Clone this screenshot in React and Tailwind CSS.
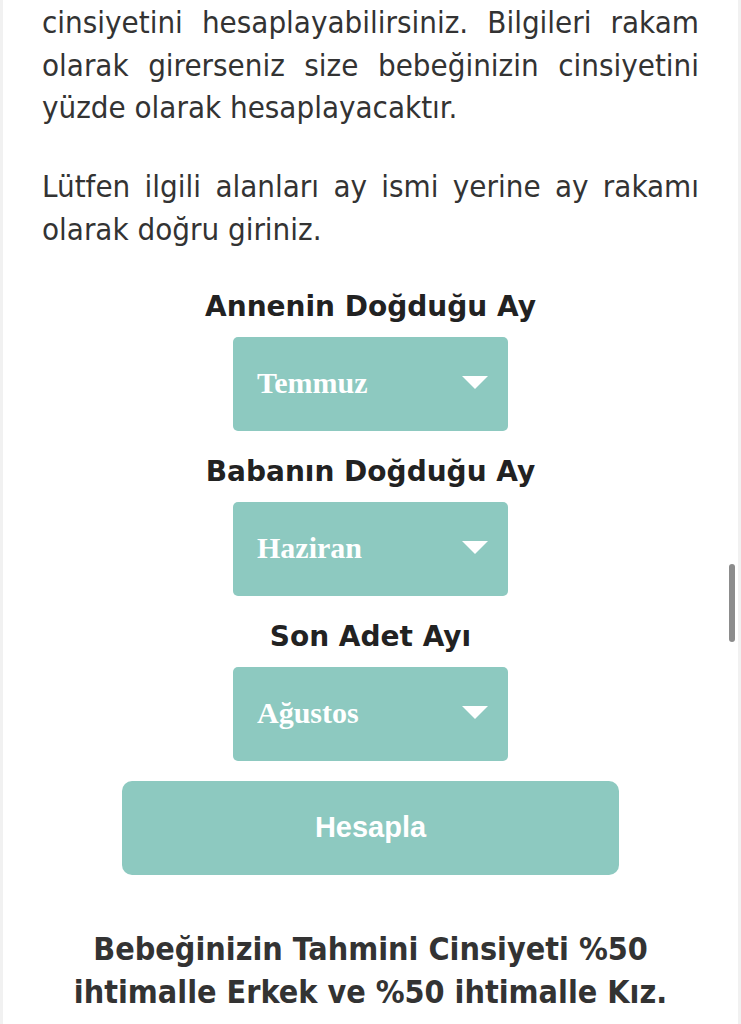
const months = [
  { label: 'Annenin Doğduğu Ay', value: 'Temmuz' },
  { label: 'Babanın Doğduğu Ay', value: 'Haziran' },
  { label: 'Son Adet Ayı', value: 'Ağustos' },
];

const MonthSelect = ({ label, value }) => (
  <div className="flex flex-col items-center mb-[23px]">
    <h3 className="text-[28px] leading-[36px] font-bold text-[#222] font-['DejaVu_Sans',sans-serif]">
      {label}
    </h3>
    <div className="mt-3 w-[275px] h-[94px] rounded-[5px] bg-[#8dc9c0] flex items-center justify-between pl-6 pr-5 pb-[3px]">
      <span className="text-white font-bold text-[30px] font-['Liberation_Serif',serif]">{value}</span>
      <svg width="26" height="13" viewBox="0 0 26 13">
        <path d="M0 0H26L13 13Z" fill="#fff" />
      </svg>
    </div>
  </div>
);

export default function App() {
  return (
    <div className="relative min-h-[1024px] bg-white border-x-[3px] border-[#f1f1f1] overflow-hidden">
      <div className="px-[39px] pt-[1px] text-[#333] text-[31px] leading-[42.5px] font-['DejaVu_Sans_Condensed',sans-serif]">
        <p className="text-justify">
          cinsiyetini hesaplayabilirsiniz. Bilgileri rakam olarak girerseniz size bebeğinizin cinsiyetini
          yüzde olarak hesaplayacaktır.
        </p>
        <p className="text-justify mt-[36.5px]">
          Lütfen ilgili alanları ay ismi yerine ay rakamı olarak doğru giriniz.
        </p>
      </div>

      <div className="mt-[39px] flex flex-col items-center">
        {months.map((m) => (
          <MonthSelect key={m.label} label={m.label} value={m.value} />
        ))}
      </div>

      <div className="-mt-[3px] flex justify-center">
        <button className="w-[497px] h-[94px] rounded-[10px] bg-[#8dc9c0] text-white font-bold text-[29px] font-['Liberation_Sans',sans-serif]">
          Hesapla
        </button>
      </div>

      <p className="mt-[53px] text-center text-[#333] font-bold text-[32px] leading-[43px] font-['DejaVu_Sans_Condensed',sans-serif] px-[60px]">
        Bebeğinizin Tahmini Cinsiyeti %50 ihtimalle Erkek ve %50 ihtimalle Kız.
      </p>

      <div className="absolute right-[3px] top-[564px] w-[6px] h-[78px] rounded-full bg-[#8c8c8c]" />
    </div>
  );
}
